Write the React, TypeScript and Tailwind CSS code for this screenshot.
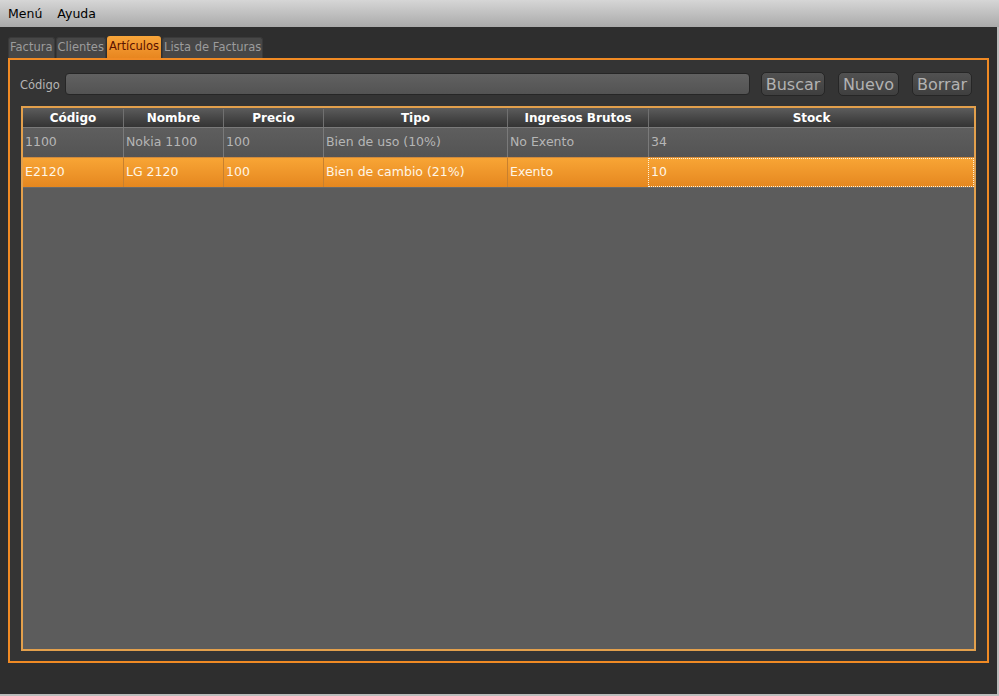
import React from "react";

const font = { fontFamily: '"DejaVu Sans", Verdana, sans-serif' };

const columns = [
  { key: "codigo", label: "Código", width: "w-[100px]" },
  { key: "nombre", label: "Nombre", width: "w-[100px]" },
  { key: "precio", label: "Precio", width: "w-[100px]" },
  { key: "tipo", label: "Tipo", width: "w-[184px]" },
  { key: "ingresos", label: "Ingresos Brutos", width: "w-[141px]" },
  { key: "stock", label: "Stock", width: "flex-1" },
];

const rows = [
  { codigo: "1100", nombre: "Nokia 1100", precio: "100", tipo: "Bien de uso (10%)", ingresos: "No Exento", stock: "34" },
  { codigo: "E2120", nombre: "LG 2120", precio: "100", tipo: "Bien de cambio (21%)", ingresos: "Exento", stock: "10" },
];

const tabs = ["Factura", "Clientes", "Artículos", "Lista de Facturas"];

export default function App() {
  const selected = 1;

  return (
    <div className="flex h-[696px] w-[999px] flex-col bg-[#2e2e2e] text-[12px]" style={font}>
      {/* Menu bar */}
      <div className="flex h-[27px] shrink-0 items-center gap-[15px] bg-gradient-to-b from-[#d6d6d6] to-[#aaaaaa] pt-[2px] pl-[8px] text-[12.5px] text-black">
        <span>Menú</span>
        <span>Ayuda</span>
      </div>

      <div className="flex flex-1 flex-col border-r-2 border-b-2 border-[#bcbcbc] px-[8px] pt-[9px]">
        {/* Tabs */}
        <div className="flex h-[22px] items-end gap-px">
          {tabs.map((t) => {
            const active = t === "Artículos";
            return (
              <div
                key={t}
                className={
                  active
                    ? "flex h-[22px] items-center rounded-t-[3px] bg-gradient-to-b from-[#f8a53a] to-[#e8861f] px-[2px] text-[11.5px] text-[#5a1200]"
                    : "flex h-[21px] items-center rounded-t-[3px] border border-b-0 border-[#3a3a3a] bg-[#474747] px-[1px] text-[11.5px] text-[#9c9c9c]"
                }
              >
                {t}
              </div>
            );
          })}
        </div>

        {/* Panel */}
        <div className="flex h-[605px] w-[981px] flex-col border-2 border-[#f08a24] bg-[#343434] px-[11px] pt-[12px] pb-[10px]">
          {/* Search row */}
          <div className="flex h-[24px] items-center">
            <span className="-ml-px w-[45px] pt-[3px] text-[11.5px] text-[#b4b4b4]">Código</span>
            <div className="h-[22px] w-[685px] rounded-[4px] border border-[#262626] bg-gradient-to-b from-[#616161] to-[#535353]" />
            <button className="ml-[11px] h-[24px] w-[64px] rounded-[5px] border border-[#262626] bg-gradient-to-b from-[#515151] to-[#3f3f3f] text-[16px] text-[#b2b2b2]">
              Buscar
            </button>
            <button className="ml-[13px] h-[24px] w-[61px] rounded-[5px] border border-[#262626] bg-gradient-to-b from-[#515151] to-[#3f3f3f] text-[16px] text-[#b2b2b2]">
              Nuevo
            </button>
            <button className="ml-[13px] h-[24px] w-[60px] rounded-[5px] border border-[#262626] bg-gradient-to-b from-[#515151] to-[#3f3f3f] text-[16px] text-[#b2b2b2]">
              Borrar
            </button>
          </div>

          {/* Table */}
          <div className="mt-[10px] flex flex-1 flex-col border-2 border-[#e3a04c] bg-[#5c5c5c] pt-px">
            {/* Header */}
            <div className="flex h-[18px] bg-gradient-to-b from-[#5a5a5a] via-[#464646] to-[#343434]">
              {columns.map((c, i) => (
                <div
                  key={c.key}
                  className={`${c.width} flex items-center justify-center font-bold text-white ${i > 0 ? "border-l border-[#707070]" : ""}`}
                >
                  {c.label}
                </div>
              ))}
            </div>

            {rows.map((r, ri) => {
              const sel = ri === selected;
              return (
                <div
                  key={r.codigo}
                  className={
                    sel
                      ? "flex h-[30px] border-t border-[#d08a3c] bg-gradient-to-b from-[#f8a535] to-[#e5871f] text-[12.5px] text-[#fff6e6]"
                      : "flex h-[30px] border-t border-[#7a7a7a] bg-gradient-to-b from-[#5e5e5e] to-[#545454] text-[12.5px] text-[#b6b6b6]"
                  }
                >
                  {columns.map((c, i) => {
                    const focus = sel && c.key === "stock";
                    return (
                      <div
                        key={c.key}
                        className={`${c.width} flex items-center overflow-hidden whitespace-nowrap pl-[2px] ${
                          i > 0 ? (sel ? "border-l border-[#c8802e]" : "border-l border-[#7a7a7a]") : ""
                        } ${focus ? "border border-dotted border-[#fff2d8]" : ""}`}
                      >
                        {r[c.key as keyof typeof r]}
                      </div>
                    );
                  })}
                </div>
              );
            })}
            <div className="flex-1 border-t border-[#6a6a6a]" />
          </div>
        </div>
      </div>
    </div>
  );
}
